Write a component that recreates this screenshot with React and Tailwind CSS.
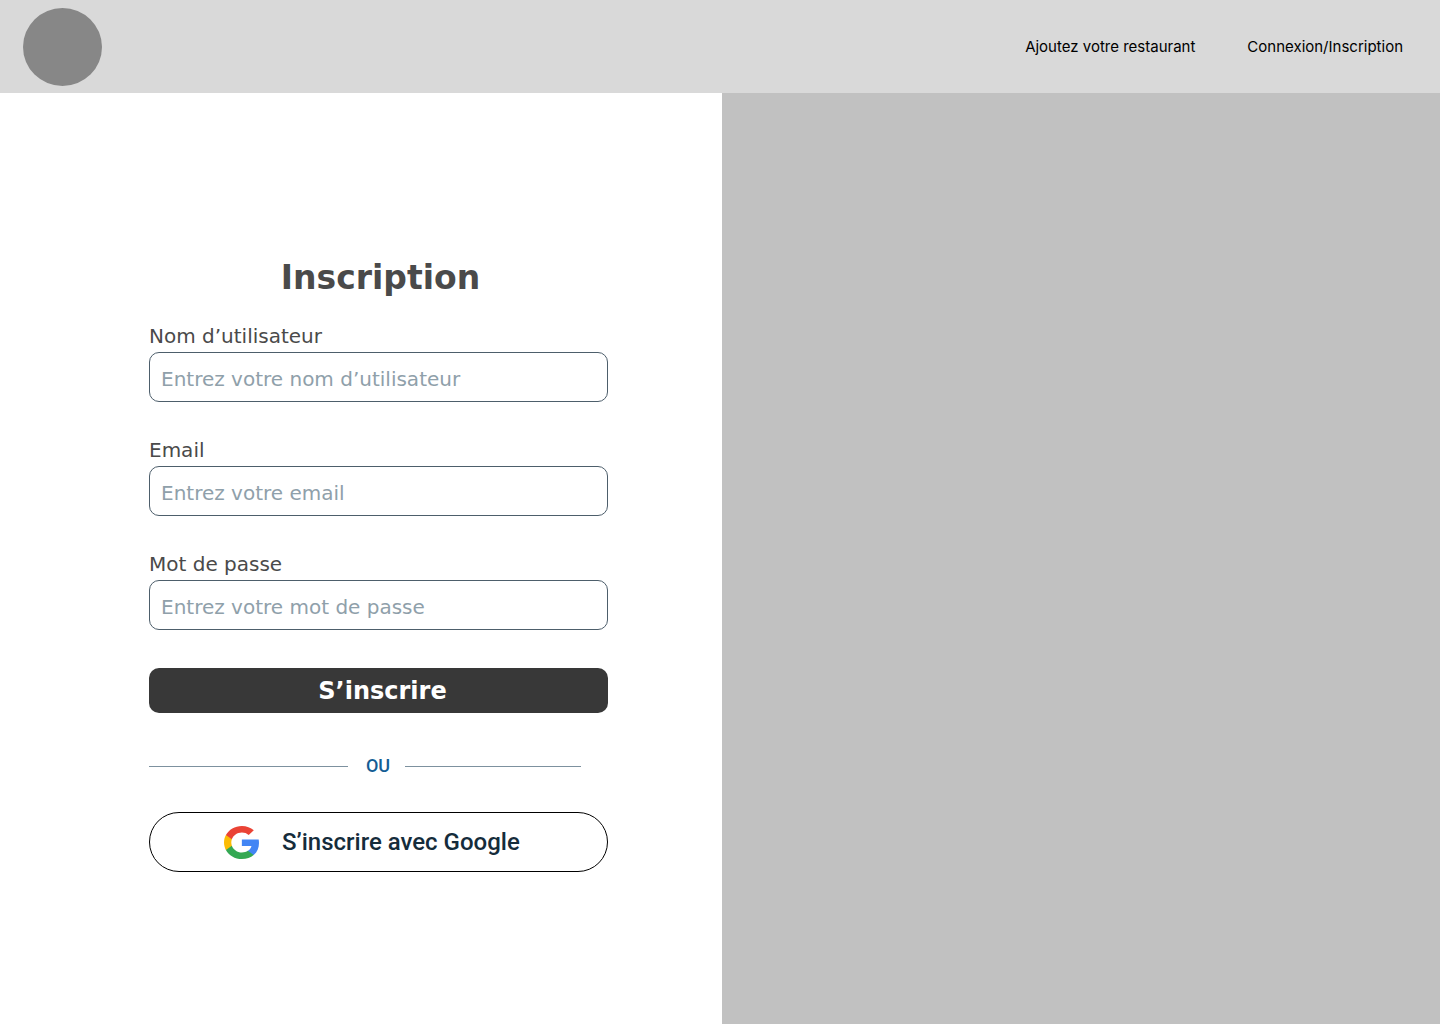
function GoogleLogo() {
  return (
    <svg
      className="h-[33px] w-[35px] shrink-0"
      viewBox="1 1 21.56 22"
      preserveAspectRatio="none"
      aria-hidden="true"
    >
      <path fill="#4285F4" d="M22.56 12.25c0-.78-.07-1.53-.2-2.25H12v4.26h5.92c-.26 1.37-1.04 2.53-2.21 3.31v2.77h3.57c2.08-1.92 3.28-4.74 3.28-8.09z" />
      <path fill="#34A853" d="M12 23c2.97 0 5.46-.98 7.28-2.66l-3.57-2.77c-.98.66-2.23 1.06-3.71 1.06-2.86 0-5.29-1.93-6.16-4.53H2.18v2.84C3.99 20.53 7.7 23 12 23z" />
      <path fill="#FBBC05" d="M5.84 14.09c-.22-.66-.35-1.36-.35-2.09s.13-1.43.35-2.09V7.07H2.18C1.43 8.55 1 10.22 1 12s.43 3.45 1.18 4.93l3.66-2.84z" />
      <path fill="#EA4335" d="M12 5.38c1.62 0 3.06.56 4.21 1.64l3.15-3.15C17.45 2.09 14.97 1 12 1 7.7 1 3.99 3.47 2.18 7.07l3.66 2.84c.87-2.6 3.3-4.53 6.16-4.53z" />
    </svg>
  );
}

function Field({ id, label, type, placeholder }) {
  return (
    <div className="flex flex-col gap-1">
      <label htmlFor={id} className="text-[20px] leading-6 text-[#4a4a4a]">
        {label}
      </label>
      <input
        id={id}
        type={type}
        placeholder={placeholder}
        className="h-[50px] w-full rounded-[10px] border border-[#4d5e6b] bg-white px-[11px] pt-[3px] text-[20px] text-[#4a4a4a] placeholder:text-[#8fa0aa]"
      />
    </div>
  );
}

export default function App() {
  return (
    <div className="flex min-h-screen flex-col bg-white">
      <header className="flex h-[93px] items-center justify-between bg-[#d9d9d9] pr-[37px] pl-[23px]">
        <a href="#" aria-label="Accueil" className="h-[78px] w-[79px] rounded-[50%] bg-[#878787]" />
        <nav className="flex gap-[52px] font-['Inter',sans-serif] text-[15px] leading-5 text-black">
          <a href="#">Ajoutez votre restaurant</a>
          <a href="#">Connexion/Inscription</a>
        </nav>
      </header>
      <main className="grid grow grid-cols-[361fr_359fr]">
        <section className="flex flex-col items-center pt-[165px] pb-12 pl-[35px]">
          <form className="flex w-full max-w-[459px] flex-col font-['Verdana','DejaVu_Sans',sans-serif]">
            <h1 className="mb-[26px] pl-1 text-center text-[33px] leading-10 font-bold text-[#4a4a4a]">Inscription</h1>
            <div className="flex flex-col gap-9">
              <Field id="username" label="Nom d’utilisateur" type="text" placeholder="Entrez votre nom d’utilisateur" />
              <Field id="email" label="Email" type="email" placeholder="Entrez votre email" />
              <Field id="password" label="Mot de passe" type="password" placeholder="Entrez votre mot de passe" />
            </div>
            <button type="submit" className="mt-[38px] h-[45px] rounded-[10px] bg-[#383838] pl-2 text-[24px] font-bold text-white">
              S’inscrire
            </button>
            <div className="mt-[42px] flex items-center pr-[27px]">
              <span className="h-px w-[199px] bg-[#7d919f]" />
              <span className="w-[57px] pl-[3px] text-center font-['Roboto',sans-serif] text-[18px] leading-[22px] font-medium text-[#135d94]">OU</span>
              <span className="h-px grow bg-[#7d919f]" />
            </div>
            <button
              type="button"
              className="mt-[35px] flex h-[60px] items-center gap-[23px] rounded-full border border-black bg-white pl-[74px] font-['Roboto',sans-serif] text-[24px] font-medium text-[#152c3b]"
            >
              <GoogleLogo />
              S’inscrire avec Google
            </button>
          </form>
        </section>
        <aside className="bg-[#c1c1c1]" />
      </main>
    </div>
  );
}
